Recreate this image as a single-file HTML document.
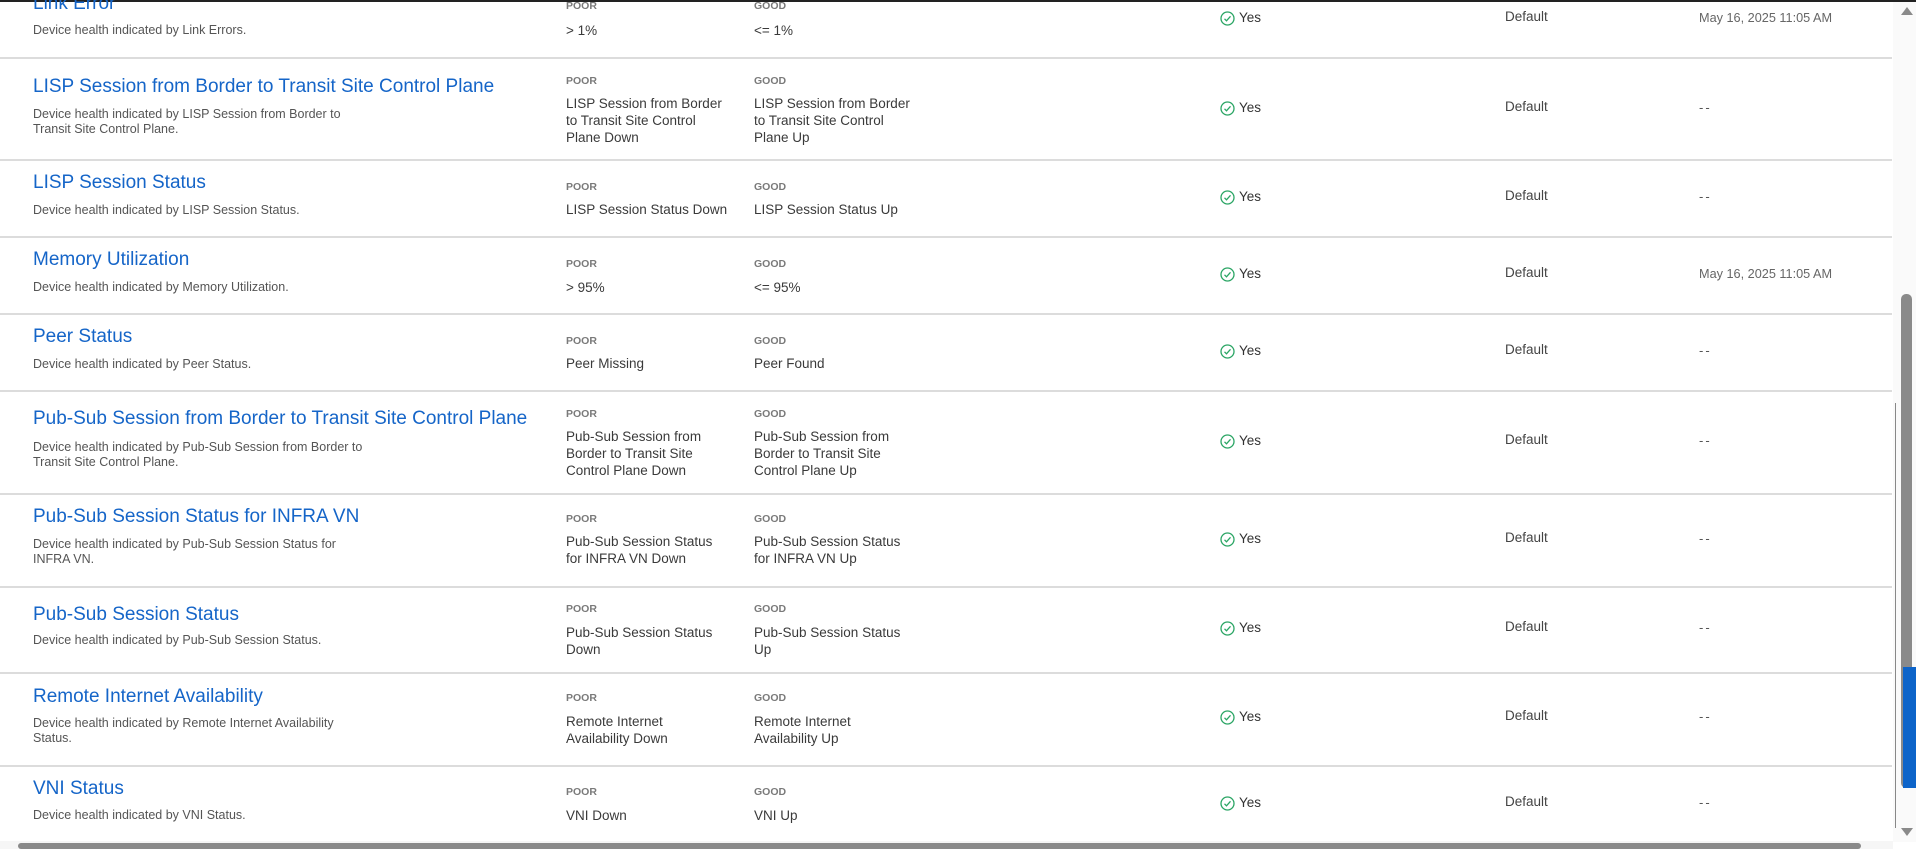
<!DOCTYPE html>
<html><head><meta charset="utf-8"><style>
*{margin:0;padding:0;box-sizing:border-box}
body{width:1916px;height:849px;overflow:hidden;background:#fff;font-family:"Liberation Sans",sans-serif;position:relative}
.a{position:absolute;white-space:nowrap}
.t{font-size:19px;line-height:20px;color:#1565c8;left:33px}
.d{font-size:12.5px;line-height:15px;color:#555;left:33px}
.l{font-size:10.5px;line-height:13px;color:#7a7a7a;font-weight:bold}
.v{font-size:13.5px;line-height:17px;color:#3a3a3a}
.p{left:566px}.g{left:754px}
.y{left:1220px;font-size:13.5px;line-height:18px;color:#333;padding-left:19px}
.y svg{position:absolute;left:0;top:2px}
.f{left:1505px;font-size:13.5px;line-height:18px;color:#444}
.dt{left:1699px;font-size:12.7px;line-height:16px;color:#666}
.dd{left:1699px;font-size:13px;line-height:16px;color:#555;letter-spacing:2px}
.sep{position:absolute;left:0;width:1892px;height:2px;background:#dcdcdc}
</style></head><body>
<div style="position:absolute;left:0;top:0;width:1916px;height:2px;background:#222"></div>

<div class="sep" style="top:57px"></div><div class="sep" style="top:159px"></div><div class="sep" style="top:236px"></div><div class="sep" style="top:313px"></div><div class="sep" style="top:390px"></div><div class="sep" style="top:493px"></div><div class="sep" style="top:586px"></div><div class="sep" style="top:672px"></div><div class="sep" style="top:765px"></div>

<div class="a t" style="top:-6px">Link Error</div>
<div class="a d" style="top:23px">Device health indicated by Link Errors.</div>
<div class="a l p" style="top:0px">POOR</div><div class="a l g" style="top:0px">GOOD</div>
<div class="a v p" style="top:22px">&gt; 1%</div><div class="a v g" style="top:22px">&lt;= 1%</div>

<div class="a t" style="top:77px">LISP Session from Border to Transit Site Control Plane</div>
<div class="a d" style="top:107px">Device health indicated by LISP Session from Border to<br>Transit Site Control Plane.</div>
<div class="a l p" style="top:75px">POOR</div><div class="a l g" style="top:75px">GOOD</div>
<div class="a v p" style="top:95px">LISP Session from Border<br>to Transit Site Control<br>Plane Down</div>
<div class="a v g" style="top:95px">LISP Session from Border<br>to Transit Site Control<br>Plane Up</div>

<div class="a t" style="top:173px">LISP Session Status</div>
<div class="a d" style="top:203px">Device health indicated by LISP Session Status.</div>
<div class="a l p" style="top:181px">POOR</div><div class="a l g" style="top:181px">GOOD</div>
<div class="a v p" style="top:201px">LISP Session Status Down</div><div class="a v g" style="top:201px">LISP Session Status Up</div>

<div class="a t" style="top:250px">Memory Utilization</div>
<div class="a d" style="top:280px">Device health indicated by Memory Utilization.</div>
<div class="a l p" style="top:258px">POOR</div><div class="a l g" style="top:258px">GOOD</div>
<div class="a v p" style="top:279px">&gt; 95%</div><div class="a v g" style="top:279px">&lt;= 95%</div>

<div class="a t" style="top:327px">Peer Status</div>
<div class="a d" style="top:357px">Device health indicated by Peer Status.</div>
<div class="a l p" style="top:335px">POOR</div><div class="a l g" style="top:335px">GOOD</div>
<div class="a v p" style="top:355px">Peer Missing</div><div class="a v g" style="top:355px">Peer Found</div>

<div class="a t" style="top:409px">Pub-Sub Session from Border to Transit Site Control Plane</div>
<div class="a d" style="top:440px">Device health indicated by Pub-Sub Session from Border to<br>Transit Site Control Plane.</div>
<div class="a l p" style="top:408px">POOR</div><div class="a l g" style="top:408px">GOOD</div>
<div class="a v p" style="top:428px">Pub-Sub Session from<br>Border to Transit Site<br>Control Plane Down</div>
<div class="a v g" style="top:428px">Pub-Sub Session from<br>Border to Transit Site<br>Control Plane Up</div>

<div class="a t" style="top:507px">Pub-Sub Session Status for INFRA VN</div>
<div class="a d" style="top:537px">Device health indicated by Pub-Sub Session Status for<br>INFRA VN.</div>
<div class="a l p" style="top:513px">POOR</div><div class="a l g" style="top:513px">GOOD</div>
<div class="a v p" style="top:533px">Pub-Sub Session Status<br>for INFRA VN Down</div>
<div class="a v g" style="top:533px">Pub-Sub Session Status<br>for INFRA VN Up</div>

<div class="a t" style="top:605px">Pub-Sub Session Status</div>
<div class="a d" style="top:633px">Device health indicated by Pub-Sub Session Status.</div>
<div class="a l p" style="top:603px">POOR</div><div class="a l g" style="top:603px">GOOD</div>
<div class="a v p" style="top:624px">Pub-Sub Session Status<br>Down</div>
<div class="a v g" style="top:624px">Pub-Sub Session Status<br>Up</div>

<div class="a t" style="top:687px">Remote Internet Availability</div>
<div class="a d" style="top:716px">Device health indicated by Remote Internet Availability<br>Status.</div>
<div class="a l p" style="top:692px">POOR</div><div class="a l g" style="top:692px">GOOD</div>
<div class="a v p" style="top:713px">Remote Internet<br>Availability Down</div>
<div class="a v g" style="top:713px">Remote Internet<br>Availability Up</div>

<div class="a t" style="top:779px">VNI Status</div>
<div class="a d" style="top:808px">Device health indicated by VNI Status.</div>
<div class="a l p" style="top:786px">POOR</div><div class="a l g" style="top:786px">GOOD</div>
<div class="a v p" style="top:807px">VNI Down</div><div class="a v g" style="top:807px">VNI Up</div>

<div class="a y" style="top:9px"><svg width="15" height="15" viewBox="0 0 15 15"><circle cx="7.5" cy="7.5" r="6.5" fill="none" stroke="#2aa564" stroke-width="1.3"/><path d="M4.5 7.8l2 2 4-4.5" fill="none" stroke="#2aa564" stroke-width="1.3"/></svg>Yes</div>
<div class="a y" style="top:99px"><svg width="15" height="15" viewBox="0 0 15 15"><circle cx="7.5" cy="7.5" r="6.5" fill="none" stroke="#2aa564" stroke-width="1.3"/><path d="M4.5 7.8l2 2 4-4.5" fill="none" stroke="#2aa564" stroke-width="1.3"/></svg>Yes</div>
<div class="a y" style="top:188px"><svg width="15" height="15" viewBox="0 0 15 15"><circle cx="7.5" cy="7.5" r="6.5" fill="none" stroke="#2aa564" stroke-width="1.3"/><path d="M4.5 7.8l2 2 4-4.5" fill="none" stroke="#2aa564" stroke-width="1.3"/></svg>Yes</div>
<div class="a y" style="top:265px"><svg width="15" height="15" viewBox="0 0 15 15"><circle cx="7.5" cy="7.5" r="6.5" fill="none" stroke="#2aa564" stroke-width="1.3"/><path d="M4.5 7.8l2 2 4-4.5" fill="none" stroke="#2aa564" stroke-width="1.3"/></svg>Yes</div>
<div class="a y" style="top:342px"><svg width="15" height="15" viewBox="0 0 15 15"><circle cx="7.5" cy="7.5" r="6.5" fill="none" stroke="#2aa564" stroke-width="1.3"/><path d="M4.5 7.8l2 2 4-4.5" fill="none" stroke="#2aa564" stroke-width="1.3"/></svg>Yes</div>
<div class="a y" style="top:432px"><svg width="15" height="15" viewBox="0 0 15 15"><circle cx="7.5" cy="7.5" r="6.5" fill="none" stroke="#2aa564" stroke-width="1.3"/><path d="M4.5 7.8l2 2 4-4.5" fill="none" stroke="#2aa564" stroke-width="1.3"/></svg>Yes</div>
<div class="a y" style="top:530px"><svg width="15" height="15" viewBox="0 0 15 15"><circle cx="7.5" cy="7.5" r="6.5" fill="none" stroke="#2aa564" stroke-width="1.3"/><path d="M4.5 7.8l2 2 4-4.5" fill="none" stroke="#2aa564" stroke-width="1.3"/></svg>Yes</div>
<div class="a y" style="top:619px"><svg width="15" height="15" viewBox="0 0 15 15"><circle cx="7.5" cy="7.5" r="6.5" fill="none" stroke="#2aa564" stroke-width="1.3"/><path d="M4.5 7.8l2 2 4-4.5" fill="none" stroke="#2aa564" stroke-width="1.3"/></svg>Yes</div>
<div class="a y" style="top:708px"><svg width="15" height="15" viewBox="0 0 15 15"><circle cx="7.5" cy="7.5" r="6.5" fill="none" stroke="#2aa564" stroke-width="1.3"/><path d="M4.5 7.8l2 2 4-4.5" fill="none" stroke="#2aa564" stroke-width="1.3"/></svg>Yes</div>
<div class="a y" style="top:794px"><svg width="15" height="15" viewBox="0 0 15 15"><circle cx="7.5" cy="7.5" r="6.5" fill="none" stroke="#2aa564" stroke-width="1.3"/><path d="M4.5 7.8l2 2 4-4.5" fill="none" stroke="#2aa564" stroke-width="1.3"/></svg>Yes</div>

<div class="a f" style="top:8px">Default</div><div class="a f" style="top:98px">Default</div><div class="a f" style="top:187px">Default</div><div class="a f" style="top:264px">Default</div><div class="a f" style="top:341px">Default</div><div class="a f" style="top:431px">Default</div><div class="a f" style="top:529px">Default</div><div class="a f" style="top:618px">Default</div><div class="a f" style="top:707px">Default</div><div class="a f" style="top:793px">Default</div>

<div class="a dt" style="top:10px">May 16, 2025 11:05 AM</div>
<div class="a dd" style="top:100px">--</div>
<div class="a dd" style="top:189px">--</div>
<div class="a dt" style="top:266px">May 16, 2025 11:05 AM</div>
<div class="a dd" style="top:343px">--</div>
<div class="a dd" style="top:433px">--</div>
<div class="a dd" style="top:531px">--</div>
<div class="a dd" style="top:620px">--</div>
<div class="a dd" style="top:709px">--</div>
<div class="a dd" style="top:795px">--</div>

<div style="position:absolute;left:1893px;top:2px;width:23px;height:840px;background:#fafafa"></div>
<div style="position:absolute;left:1895px;top:403px;width:1px;height:425px;background:#888"></div>
<div style="position:absolute;left:1901px;top:294px;width:11px;height:494px;background:#8a8a8a;border-radius:5px"></div>
<div style="position:absolute;left:1903px;top:667px;width:13px;height:121px;background:#0d64c9"></div>
<div style="position:absolute;left:1901px;top:7px;width:0;height:0;border-left:6px solid transparent;border-right:6px solid transparent;border-bottom:8px solid #8a8a8a"></div>
<div style="position:absolute;left:1901px;top:828px;width:0;height:0;border-left:6px solid transparent;border-right:6px solid transparent;border-top:8px solid #8a8a8a"></div>
<div style="position:absolute;left:0;top:841px;width:1893px;height:8px;background:#f6f6f6"></div>
<div style="position:absolute;left:18px;top:843px;width:1843px;height:6px;background:#8a8a8a;border-radius:3px"></div>
</body></html>
